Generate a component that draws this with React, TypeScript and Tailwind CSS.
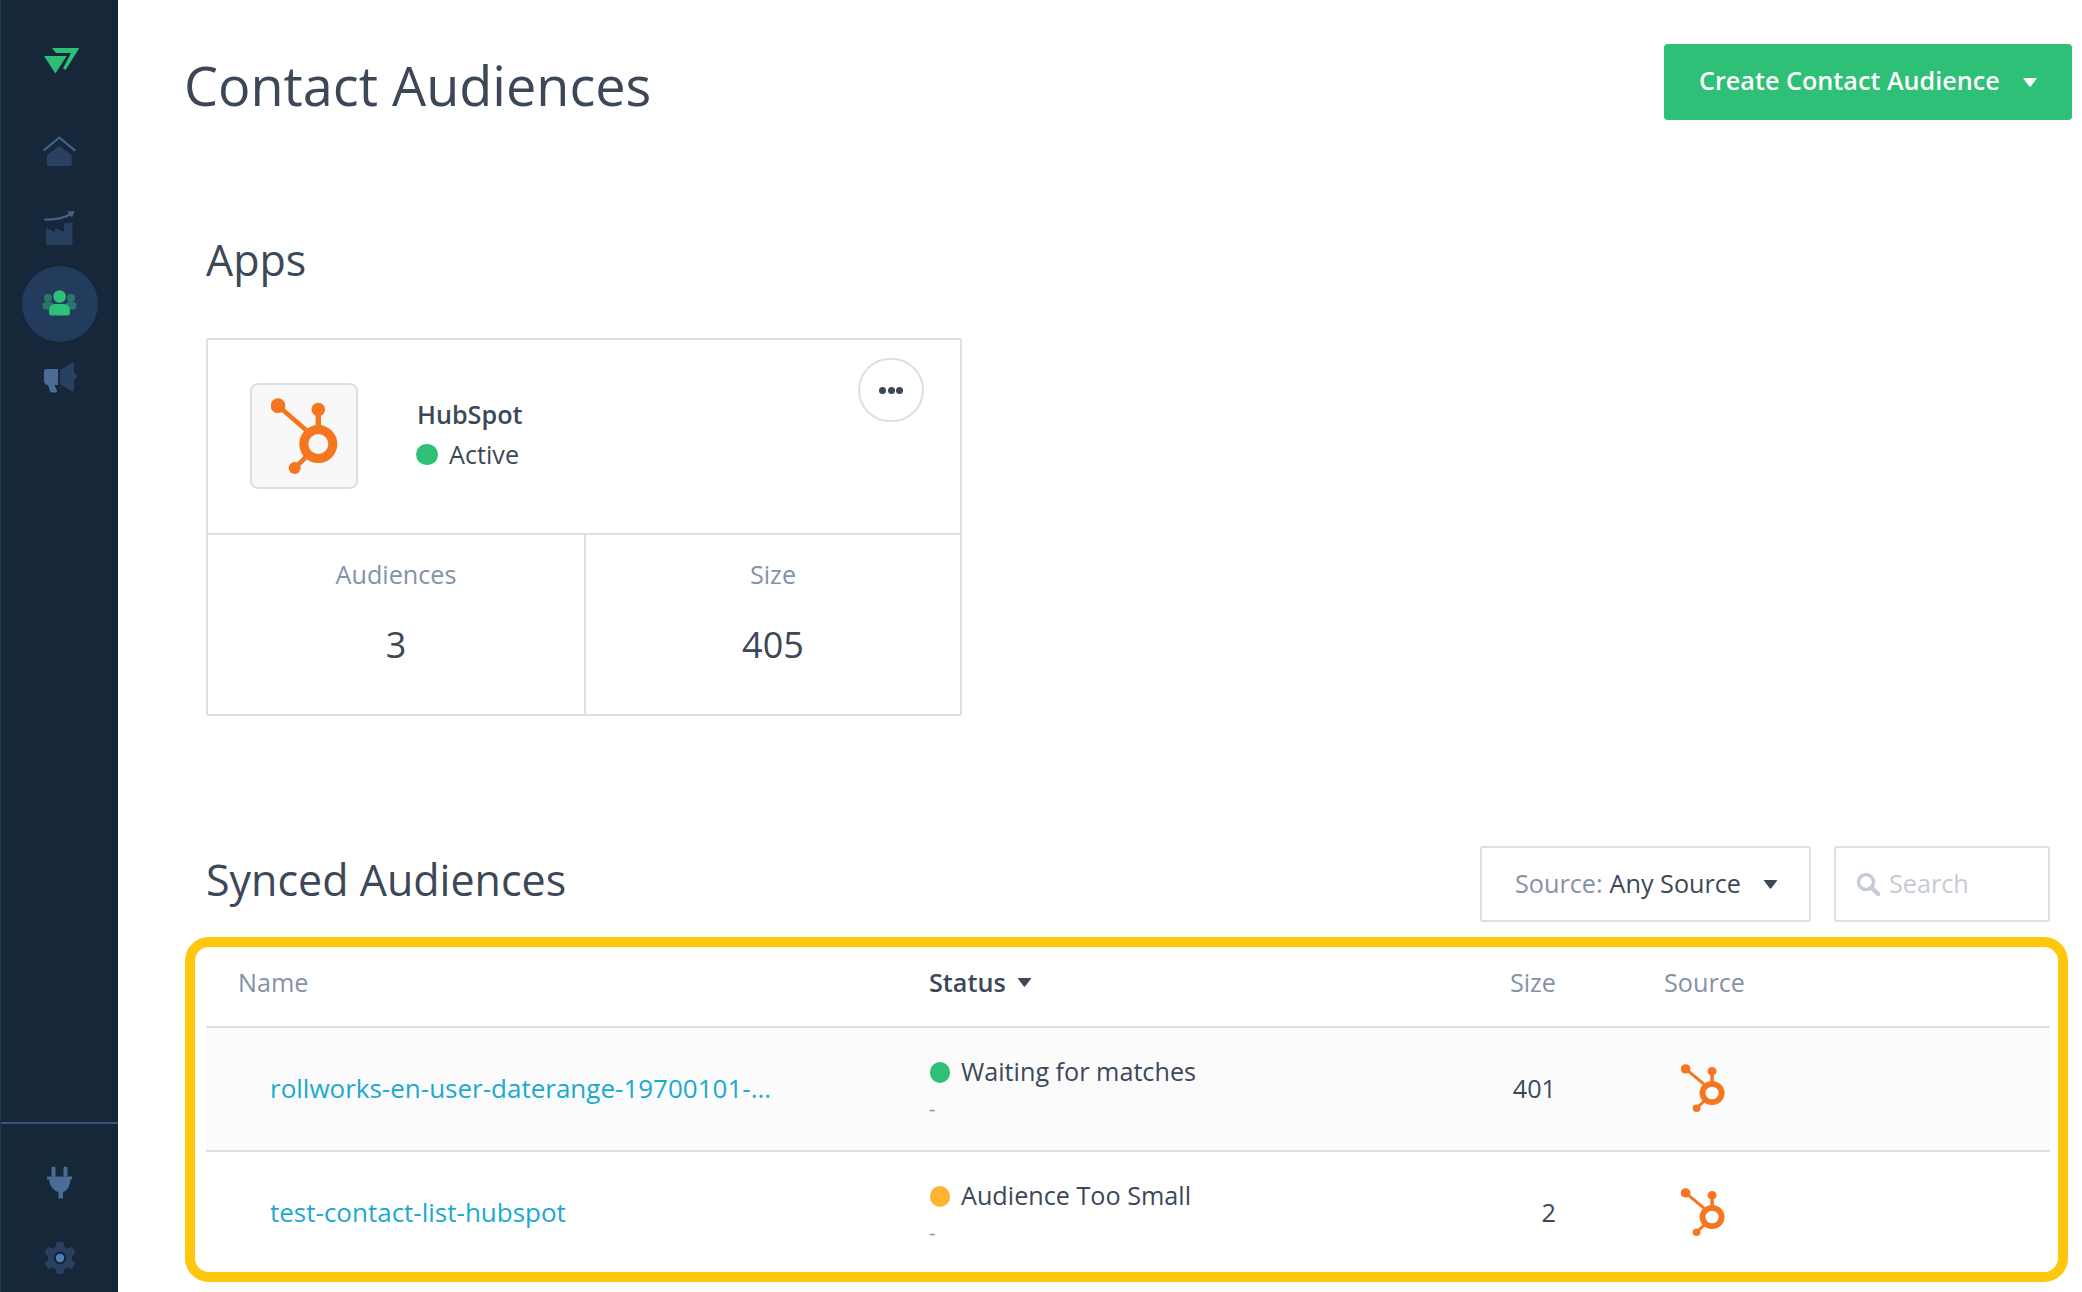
import React from "react";

const HubSpot = ({ className }: { className: string }) => (
  <svg viewBox="32 28 67 76" className={className} preserveAspectRatio="none">
    <g fill="none" stroke="#f6761f">
      <circle cx="79.3" cy="74" r="14.5" strokeWidth="9" />
      <path d="M39 35.7L67 60" strokeWidth="4.6" />
      <path d="M79.3 40V58" strokeWidth="5.4" />
      <path d="M55.7 98L69 85" strokeWidth="4.6" />
    </g>
    <g fill="#f6761f">
      <circle cx="39" cy="35.7" r="7.4" />
      <circle cx="79.3" cy="39.5" r="6.8" />
      <circle cx="55.7" cy="98" r="6" />
    </g>
  </svg>
);

const Caret = ({ className }: { className: string }) => (
  <svg viewBox="0 0 14 9" className={className}>
    <path d="M0.5 0.8Q0 0 1 0H13Q14 0 13.5 0.8L7.8 8.3Q7 9 6.2 8.3Z" fill="currentColor" />
  </svg>
);

const NavIcon = ({ children, className = "" }: { children: React.ReactNode; className?: string }) => (
  <svg viewBox="0 0 118 60" className={`w-[118px] h-[60px] block ${className}`}>
    {children}
  </svg>
);

const Sidebar = () => (
  <aside className="w-[118px] shrink-0 h-screen bg-[#152739] border-l border-[#20364d] flex flex-col box-border">
    <div className="pt-[48px] h-[120px]">
      <svg viewBox="44 48 36 26" className="ml-[43px] w-[36px] h-[26px] block">
        <defs>
          <linearGradient id="lg" x1="0" y1="0" x2="0" y2="1">
            <stop offset="0" stopColor="#2ec077" />
            <stop offset="1" stopColor="#2bb873" />
          </linearGradient>
        </defs>
        <path d="M44 56H66.7L55.3 73.5Z" fill="url(#lg)" />
        <path d="M52 48H79.3L65.7 70L63 68.3L71 53H56Z" fill="url(#lg)" />
      </svg>
    </div>
    <NavIcon>
      <path d="M42.5 30.7L58.3 17.7L74.3 30.7" fill="none" stroke="#42628b" strokeWidth="2.2" />
      <path d="M46 35L58.3 25.7L70.7 35V45.5Q70.7 46 70 46H47Q46 46 46 45.5Z" fill="#2a4060" />
    </NavIcon>
    <NavIcon className="mt-[16px]">
      <path d="M44 23.5Q60 24 70 18" fill="none" stroke="#42628b" strokeWidth="2.2" strokeLinecap="round" />
      <path d="M66 15.5L73.500 15L71 21.5Z" fill="#42628b" />
      <path d="M45 48V32L54 36V32L63 36V27.5L71.5 26.5V48Q71.5 49 71 49H46Q45 49 45 48Z" fill="#2a4060" />
    </NavIcon>
    <div className="w-[76px] h-[76px] ml-[21px] mt-[10px] rounded-full bg-[#233c5e] flex items-center justify-center">
      <svg viewBox="0 0 36 26" className="w-[36px] h-[26px] block mr-[1px] mb-[2px]">
        <circle cx="6" cy="8" r="4" fill="#2b7769" />
        <circle cx="29" cy="8" r="4" fill="#2b7769" />
        <rect x="0.5" y="12" width="11" height="7.5" rx="3.7" fill="#2b7769" />
        <rect x="23.5" y="12" width="11" height="7.5" rx="3.7" fill="#2b7769" />
        <circle cx="17.6" cy="6.5" r="6.3" fill="#2ec077" />
        <path d="M7 21.5Q7 14 13 14H22Q28 14 28 21.5V23Q28 25.5 25.5 25.5H9.5Q7 25.5 7 23Z" fill="#2ec077" />
      </svg>
    </div>
    <NavIcon className="mt-[4px]">
      <path d="M59 24L71.5 16.5Q73 16.5 73 18V44Q73 45.5 71.500 45.500L59 38Z" fill="#2a4060" />
      <path d="M73 27.5A3 3 0 0 1 73 33.5Z" fill="#2a4060" />
      <path d="M43 25.5Q43 23 45.5 23H57V39H53.5L56 45Q56.5 46.5 55 46.5H51Q49.5 46.5 49 45L47 39H45.5Q43 37.5 43 35Z" fill="#4a6c97" />
    </NavIcon>
    <div className="mt-auto border-t-2 border-[#37557c]">
      <svg viewBox="0 0 118 60" className="w-[118px] h-[60px] block mt-[37px]">
        <path d="M50.500 7Q50.500 5.500 52.500 5.500Q54.500 5.500 54.500 7V15.500H50.500Z M62.500 7Q62.500 5.500 64.500 5.500Q66.500 5.500 66.500 7V15.500H62.500Z" fill="#4a6c97" />
        <path d="M46 15.500H71V18.500H69.500Q69 28 62 31.500V37.500H57.500V31.500Q49 28 48 18.500H46Z" fill="#4a6c97" />
      </svg>
      <svg viewBox="0 0 118 40" className="w-[118px] h-[40px] block mt-[17px] mb-[14px]">
        <g fill="#2a4060">
          <circle cx="59" cy="20" r="12" />
          <rect x="55" y="4" width="8" height="7" rx="2" />
          <rect x="55" y="29" width="8" height="7" rx="2" />
          <g transform="rotate(60 59 20)">
            <rect x="55" y="4" width="8" height="7" rx="2" />
            <rect x="55" y="29" width="8" height="7" rx="2" />
          </g>
          <g transform="rotate(120 59 20)">
            <rect x="55" y="4" width="8" height="7" rx="2" />
            <rect x="55" y="29" width="8" height="7" rx="2" />
          </g>
        </g>
        <circle cx="59" cy="20" r="6.500" fill="#14273a" />
        <circle cx="59" cy="20" r="4.200" fill="#4d7fb5" />
      </svg>
    </div>
  </aside>
);

const Row = ({
  name,
  status,
  dot,
  size,
  stripe,
}: {
  name: string;
  status: string;
  dot: string;
  size: string;
  stripe?: boolean;
}) => (
  <div
    className={`grid grid-cols-[723px_471px_156px_1fr] h-[122px] border-t-2 border-[#dcdfe3] box-content ${
      stripe ? "bg-[#fbfbfc]" : "bg-white"
    }`}
  >
    <div className="pl-[64px] pt-[42px] text-[26px] leading-[36px] text-[#1ba9cf] truncate">{name}</div>
    <div className="pt-[25px]">
      <div className="flex items-center h-[36px]">
        <span className={`w-[20px] h-[21px] rounded-full ml-[1px] mr-[11px] mt-[2px] ${dot}`} />
        <span className="text-[25.2px] leading-[36px] text-[#3c4858]">{status}</span>
      </div>
      <div className="text-[20px] leading-[20px] text-[#8492a6] mt-[10px]">-</div>
    </div>
    <div className="pt-[42px] text-right text-[25.2px] leading-[36px] text-[#3c4858]">{size}</div>
    <div className="pl-[125px] pt-[36px]">
      <HubSpot className="w-[44px] h-[48px] block" />
    </div>
  </div>
);

export default function App() {
  return (
    <div
      className="flex h-screen overflow-hidden bg-white"
      style={{ fontFamily: '"Open Sans", sans-serif' }}
    >
      <Sidebar />
      <main className="flex-1 min-w-0">
        <header className="flex justify-between items-start pt-[44px] pl-[66px] pr-[10px]">
          <h1 className="text-[54px] leading-[86px] text-[#3c4858] font-normal -mt-[2px]">Contact Audiences</h1>
          <button className="w-[408px] h-[76px] rounded-[4px] bg-[#2ec077] text-white text-[25.2px] flex items-center pl-[35px] pb-[2px] font-semibold">
            <span>Create Contact Audience</span>
            <Caret className="w-[14px] h-[9px] ml-[23px] mt-[2px]" />
          </button>
        </header>

        <section className="pl-[88px] pt-[100px]">
          <h2 className="text-[43px] leading-[64px] text-[#3c4858] font-normal">Apps</h2>
          <div className="mt-[46px] w-[756px] h-[378px] border-2 border-[#dcdfe3] rounded-[3px] box-border flex flex-col">
            <div className="relative h-[195px] flex border-b-2 border-[#dcdfe3]">
              <div className="w-[108px] h-[106px] ml-[42px] mt-[43px] rounded-[8px] bg-[#f8f8f9] border-2 border-[#dcdfe3] flex items-center justify-center box-border">
                <HubSpot className="w-[67px] h-[76px]" />
              </div>
              <div className="ml-[59px] pt-[56px]">
                <div className="text-[25.2px] leading-[36px] font-semibold text-[#3c4858]">HubSpot</div>
                <div className="flex items-center mt-[4px]">
                  <span className="w-[22px] h-[21px] rounded-full bg-[#2ec077] -ml-[1px] mr-[11px]" />
                  <span className="text-[25.2px] leading-[36px] text-[#3c4858]">Active</span>
                </div>
              </div>
              <button className="absolute right-[36px] top-[18px] w-[66px] h-[64px] rounded-full border-2 border-[#dcdfe3] flex items-center justify-center gap-[1.5px]">
                <span className="w-[7px] h-[7px] rounded-full bg-[#3c4858]" />
                <span className="w-[7px] h-[7px] rounded-full bg-[#3c4858]" />
                <span className="w-[7px] h-[7px] rounded-full bg-[#3c4858]" />
              </button>
            </div>
            <div className="flex flex-1">
              <div className="w-[378px] border-r-2 border-[#dcdfe3] text-center pt-[21px] box-border">
                <div className="text-[25.2px] leading-[36px] text-[#8492a6]">Audiences</div>
                <div className="text-[36px] leading-[50px] text-[#3c4858] mt-[28px]">3</div>
              </div>
              <div className="flex-1 text-center pt-[21px]">
                <div className="text-[25.2px] leading-[36px] text-[#8492a6]">Size</div>
                <div className="text-[36px] leading-[50px] text-[#3c4858] mt-[28px]">405</div>
              </div>
            </div>
          </div>
        </section>

        <section className="pl-[67px] pt-[130px]">
          <div className="flex items-start pl-[21px] pr-[32px]">
            <h2 className="text-[43px] leading-[64px] text-[#3c4858] font-normal mt-[2px]">Synced Audiences</h2>
            <div className="ml-auto w-[331px] h-[76px] border-2 border-[#dcdfe3] rounded-[3px] flex items-center pl-[33px] text-[25.2px] box-border">
              <span className="text-[#8492a6]">Source:</span>
              <span className="text-[#3c4858] ml-[7px]">Any Source</span>
              <Caret className="w-[15px] h-[9px] ml-[22px] text-[#3c4858]" />
            </div>
            <div className="ml-[23px] w-[216px] h-[76px] border-2 border-[#dcdfe3] rounded-[3px] flex items-center pl-[20px] text-[25.2px] text-[#c6ccd4] box-border">
              <svg viewBox="0 0 24 24" className="w-[24px] h-[24px]" fill="none" stroke="#c6ccd4">
                <circle cx="10" cy="10" r="7.5" strokeWidth="3.5" />
                <path d="M15.500 15.500L22 22" strokeWidth="4.500" strokeLinecap="round" />
              </svg>
              <span className="ml-[9px]">Search</span>
            </div>
          </div>
          <div className="mt-[15px] w-[1883px] h-[345px] border-[10px] border-[#fec60c] rounded-[24px] box-border pl-[11px] pr-[8px] overflow-hidden bg-white">
            <div className="grid grid-cols-[723px_471px_156px_1fr] h-[79px] text-[25.2px] leading-[36px]">
              <div className="pl-[32px] pt-[17px] text-[#8492a6]">Name</div>
              <div className="pt-[17px] font-semibold text-[#3c4858] flex items-start">
                <span>Status</span>
                <Caret className="w-[15px] h-[9px] ml-[11px] mt-[14px]" />
              </div>
              <div className="pt-[17px] text-right text-[#8492a6]">Size</div>
              <div className="pl-[108px] pt-[17px] text-[#8492a6]">Source</div>
            </div>
            <Row name="rollworks-en-user-daterange-19700101-..." status="Waiting for matches" dot="bg-[#2ec077]" size="401" stripe />
            <Row name="test-contact-list-hubspot" status="Audience Too Small" dot="bg-[#ffb32f]" size="2" />
          </div>
          <div className="ml-[21px] mr-[32px] h-[9px] bg-[#fbfbfc]" />
        </section>
      </main>
    </div>
  );
}
